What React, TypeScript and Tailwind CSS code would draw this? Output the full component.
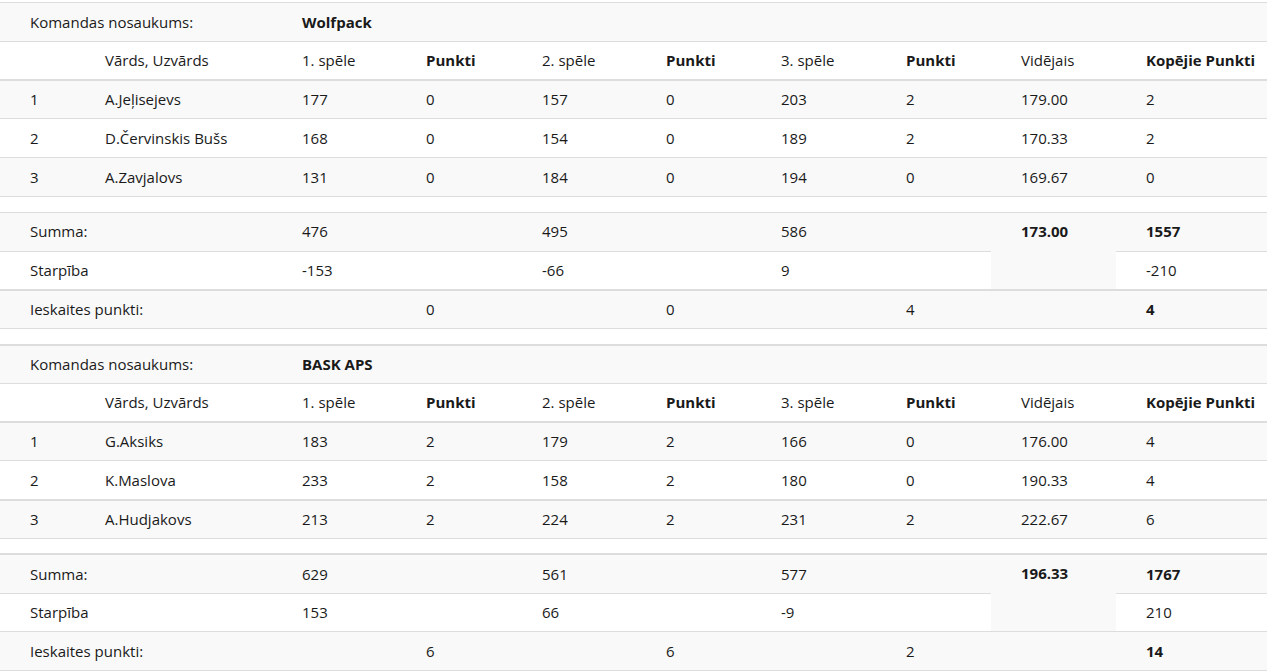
import React from "react";

type Player = {
  nr: number;
  name: string;
  games: [number, number, number];
  points: [number, number, number];
  avg: string;
  total: number;
};

type Team = {
  name: string;
  players: Player[];
  sums: [number, number, number];
  avg: string;
  sumTotal: number;
  diffs: [number, number, number];
  diffTotal: number;
  credit: [number, number, number];
  creditTotal: number;
  // which rows get the heavier top border
  thick: string[];
};

const teams: Team[] = [
  {
    name: "Wolfpack",
    players: [
      { nr: 1, name: "A.Jeļisejevs", games: [177, 157, 203], points: [0, 0, 2], avg: "179.00", total: 2 },
      { nr: 2, name: "D.Červinskis Bušs", games: [168, 154, 189], points: [0, 0, 2], avg: "170.33", total: 2 },
      { nr: 3, name: "A.Zavjalovs", games: [131, 184, 194], points: [0, 0, 0], avg: "169.67", total: 0 },
    ],
    sums: [476, 495, 586],
    avg: "173.00",
    sumTotal: 1557,
    diffs: [-153, -66, 9],
    diffTotal: -210,
    credit: [0, 0, 4],
    creditTotal: 4,
    thick: ["p0", "credit"],
  },
  {
    name: "BASK APS",
    players: [
      { nr: 1, name: "G.Aksiks", games: [183, 179, 166], points: [2, 2, 0], avg: "176.00", total: 4 },
      { nr: 2, name: "K.Maslova", games: [233, 158, 180], points: [2, 2, 0], avg: "190.33", total: 4 },
      { nr: 3, name: "A.Hudjakovs", games: [213, 224, 231], points: [2, 2, 2], avg: "222.67", total: 6 },
    ],
    sums: [629, 561, 577],
    avg: "196.33",
    sumTotal: 1767,
    diffs: [153, 66, -9],
    diffTotal: 210,
    credit: [6, 6, 2],
    creditTotal: 14,
    thick: ["team", "p0", "p2", "sum"],
  },
];

const widths = [75, 197, 124, 116, 124, 115, 125, 115, 125, 151];

const Cell = ({
  children,
  bold,
  thick,
  colSpan,
  rowSpan,
  className = "",
}: {
  children?: React.ReactNode;
  bold?: boolean;
  thick?: boolean;
  colSpan?: number;
  rowSpan?: number;
  className?: string;
}) => (
  <td
    colSpan={colSpan}
    rowSpan={rowSpan}
    className={`pl-[30px] pr-2 h-[38.75px] py-0 border-[#ddd] ${thick ? "border-t-2" : "border-t"} ${
      bold ? "font-bold" : ""
    } ${className}`}
  >
    {children}
  </td>
);

const Spacer = ({ thick }: { thick?: boolean }) => (
  <tr className="bg-white">
    <td colSpan={10} className={`h-[16px] p-0 border-[#ddd] ${thick ? "border-t-2" : "border-t"}`} />
  </tr>
);

const TeamBlock = ({ team }: { team: Team }) => {
  const t = (k: string) => team.thick.includes(k);
  return (
    <tbody>
      <tr className="bg-[#f9f9f9]">
        <Cell colSpan={2} thick={t("team")}>Komandas nosaukums:</Cell>
        <Cell bold thick={t("team")}>{team.name}</Cell>
        <Cell colSpan={7} thick={t("team")} />
      </tr>
      <tr className="bg-white">
        <Cell />
        <Cell>Vārds, Uzvārds</Cell>
        <Cell>1. spēle</Cell>
        <Cell bold>Punkti</Cell>
        <Cell>2. spēle</Cell>
        <Cell bold>Punkti</Cell>
        <Cell>3. spēle</Cell>
        <Cell bold>Punkti</Cell>
        <Cell>Vidējais</Cell>
        <Cell bold>Kopējie Punkti</Cell>
      </tr>
      {team.players.map((p, i) => {
        const thick = t(`p${i}`);
        return (
          <tr key={p.nr} className={i % 2 === 0 ? "bg-[#f9f9f9]" : "bg-white"}>
            <Cell thick={thick}>{p.nr}</Cell>
            <Cell thick={thick}>{p.name}</Cell>
            <Cell thick={thick}>{p.games[0]}</Cell>
            <Cell thick={thick}>{p.points[0]}</Cell>
            <Cell thick={thick}>{p.games[1]}</Cell>
            <Cell thick={thick}>{p.points[1]}</Cell>
            <Cell thick={thick}>{p.games[2]}</Cell>
            <Cell thick={thick}>{p.points[2]}</Cell>
            <Cell thick={thick}>{p.avg}</Cell>
            <Cell thick={thick}>{p.total}</Cell>
          </tr>
        );
      })}
      <Spacer />
      <tr className="bg-[#f9f9f9]">
        <Cell colSpan={2} thick={t("sum")}>Summa:</Cell>
        <Cell thick={t("sum")}>{team.sums[0]}</Cell>
        <Cell thick={t("sum")} />
        <Cell thick={t("sum")}>{team.sums[1]}</Cell>
        <Cell thick={t("sum")} />
        <Cell thick={t("sum")}>{team.sums[2]}</Cell>
        <Cell thick={t("sum")} />
        <Cell rowSpan={2} bold thick={t("sum")} className="align-top pt-[7px]">
          {team.avg}
        </Cell>
        <Cell bold thick={t("sum")}>{team.sumTotal}</Cell>
      </tr>
      <tr className="bg-white">
        <Cell colSpan={2}>Starpība</Cell>
        <Cell>{team.diffs[0]}</Cell>
        <Cell />
        <Cell>{team.diffs[1]}</Cell>
        <Cell />
        <Cell>{team.diffs[2]}</Cell>
        <Cell />
        <Cell>{team.diffTotal}</Cell>
      </tr>
      <tr className="bg-[#f9f9f9]">
        <Cell colSpan={2} thick={t("credit")}>Ieskaites punkti:</Cell>
        <Cell thick={t("credit")} />
        <Cell thick={t("credit")}>{team.credit[0]}</Cell>
        <Cell thick={t("credit")} />
        <Cell thick={t("credit")}>{team.credit[1]}</Cell>
        <Cell thick={t("credit")} />
        <Cell thick={t("credit")}>{team.credit[2]}</Cell>
        <Cell thick={t("credit")} />
        <Cell bold thick={t("credit")}>{team.creditTotal}</Cell>
      </tr>
      <Spacer />
    </tbody>
  );
};

export default function App() {
  return (
    <div className="min-h-screen bg-white pt-[2px] font-['Open_Sans',sans-serif] text-[15px] text-[#1a1a1a]">
      <table className="w-[1267px] table-fixed border-collapse text-left">
        <colgroup>
          {widths.map((w, i) => (
            <col key={i} style={{ width: w }} />
          ))}
        </colgroup>
        {teams.map((team, i) => (
          <TeamBlock key={i} team={team} />
        ))}
      </table>
    </div>
  );
}
